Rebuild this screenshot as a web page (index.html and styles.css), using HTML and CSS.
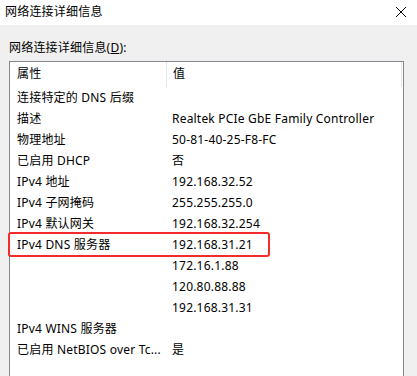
FILE: index.html
```html
<!DOCTYPE html>
<html lang="zh-CN">
<head>
    <meta charset="UTF-8">
    <title>网络连接详细信息</title>
    <link rel="stylesheet" href="styles.css">
</head>
<body>
    <header class="titlebar">
        <span class="title">网络连接详细信息</span>
        <svg class="close" width="12" height="12" viewBox="0 0 12 12">
            <path d="M1 1L11 11M11 1L1 11" stroke="#000" stroke-width="1" fill="none"/>
        </svg>
    </header>
    <main class="dialog">
        <div class="label">网络连接详细信息(<u>D</u>):</div>
        <div class="listbox">
            <div class="row head">
                <div class="cell key">属性</div>
                <div class="cell val">值</div>
            </div>
            <div class="row"><div class="cell key">连接特定的 DNS 后缀</div><div class="cell val"></div></div>
            <div class="row"><div class="cell key">描述</div><div class="cell val">Realtek PCIe GbE Family Controller</div></div>
            <div class="row"><div class="cell key">物理地址</div><div class="cell val">50-81-40-25-F8-FC</div></div>
            <div class="row"><div class="cell key">已启用 DHCP</div><div class="cell val">否</div></div>
            <div class="row"><div class="cell key">IPv4 地址</div><div class="cell val">192.168.32.52</div></div>
            <div class="row"><div class="cell key">IPv4 子网掩码</div><div class="cell val">255.255.255.0</div></div>
            <div class="row"><div class="cell key">IPv4 默认网关</div><div class="cell val">192.168.32.254</div></div>
            <div class="row marked"><div class="cell key">IPv4 DNS 服务器</div><div class="cell val">192.168.31.21</div></div>
            <div class="row"><div class="cell key"></div><div class="cell val">172.16.1.88</div></div>
            <div class="row"><div class="cell key"></div><div class="cell val">120.80.88.88</div></div>
            <div class="row"><div class="cell key"></div><div class="cell val">192.168.31.31</div></div>
            <div class="row"><div class="cell key">IPv4 WINS 服务器</div><div class="cell val"></div></div>
            <div class="row"><div class="cell key">已启用 NetBIOS over Tc...</div><div class="cell val">是</div></div>
            <div class="row"><div class="cell key"></div><div class="cell val"></div></div>
        </div>
    </main>
</body>
</html>
```

FILE: styles.css
```css
body {
    margin: 0;
    padding: 0;
    width: 417px;
    height: 376px;
    overflow: hidden;
    background-color: #f0f0f0;
    color: #000;
    font-family: 'Noto Sans', 'Noto Sans CJK SC', sans-serif;
    font-size: 12px;
    letter-spacing: 0.2px;
}

.titlebar {
    height: 25px;
    background-color: #fff;
    display: flex;
    align-items: center;
    justify-content: space-between;
    padding: 0 10px 0 5px;
}

.title {
    line-height: 16px;
    margin-top: -2px;
}

.close {
    margin-top: -2px;
}

.dialog {
    padding: 15px 13px 0 9px;
}

.label {
    line-height: 16px;
    margin-bottom: 5px;
}

.listbox {
    background-color: #fff;
    border: 1px solid #828790;
    height: 330px;
}

.row {
    display: flex;
    height: 21px;
    line-height: 21px;
    position: relative;
}

.row.head {
    height: 25px;
    line-height: 24px;
}

.cell {
    white-space: nowrap;
    overflow: hidden;
}

.key {
    width: 149px;
    padding-left: 7px;
}

.val {
    flex: 1;
    padding-left: 6px;
}

.head .key {
    border-right: 1px solid #e5e5e5;
}

.head .val {
    border-right: 1px solid #e5e5e5;
    margin-right: 1px;
}

.row.marked::after {
    content: '';
    position: absolute;
    left: -2px;
    top: -2px;
    width: 258px;
    height: 21px;
    border: 2px solid #f22b2b;
    border-radius: 3px;
}
```
